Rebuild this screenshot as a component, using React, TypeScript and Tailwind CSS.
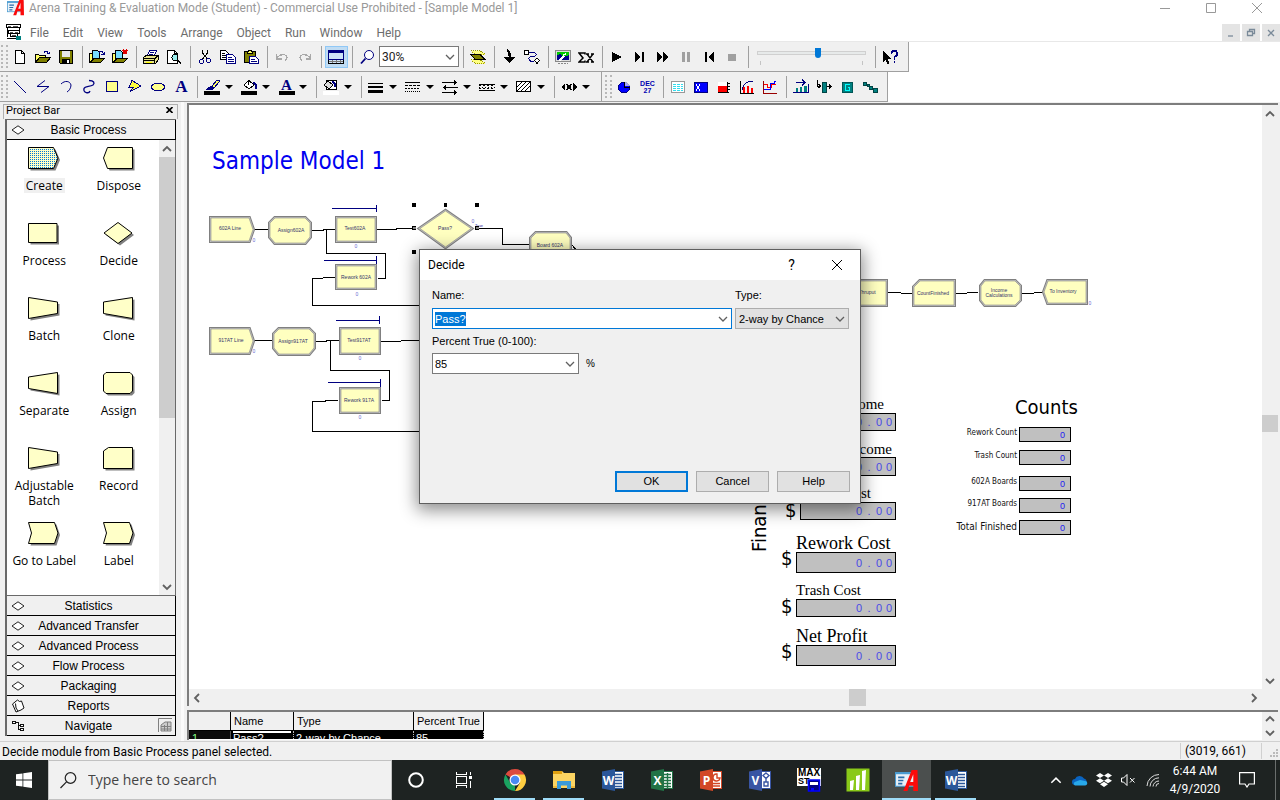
import React, { useEffect, useRef } from "react";

const UI = "font-[Roboto,'Noto_Sans',sans-serif]";
const HUMANIST = "font-['Open_Sans','Noto_Sans',sans-serif]";
const TAHOMA = "font-['DejaVu_Sans_Condensed','Noto_Sans',sans-serif]";

/* ---------- generic pieces ---------- */

function Icon({ children, className = "h-4 w-4", box = "0 0 16 16" }: { children: React.ReactNode; className?: string; box?: string }) {
  return (
    <svg viewBox={box} className={"shrink-0 " + className} fill="none" stroke="#000" shapeRendering="crispEdges" aria-hidden="true">
      {children}
    </svg>
  );
}

function Chevron({ dir = "down", className = "h-[6px] w-[10px]", color = "#606060", width = 1.3 }: { dir?: "up" | "down" | "left" | "right"; className?: string; color?: string; width?: number }) {
  const d = {
    down: "M1 1 5 5l4-4",
    up: "M1 5 5 1l4 4",
    left: "M7 -1 3 3l4 4",
    right: "M3 -1l4 4-4 4",
  }[dir];
  return (
    <svg viewBox="0 0 10 6" className={"shrink-0 overflow-visible " + className} fill="none" stroke={color} strokeWidth={width} aria-hidden="true">
      <path d={d} />
    </svg>
  );
}

function ArenaLogo({ className }: { className: string }) {
  return (
    <svg viewBox="0 0 22 22" className={className} aria-hidden="true">
      <rect x="0.5" y="3.5" width="20" height="13" fill="#e8f1f8" stroke="#4a9bd0" />
      <path d="M0 4h21" stroke="#4a9bd0" strokeWidth="2" />
      <path d="M3 8h6M3 11h5M3 14h4" stroke="#2a6da8" strokeWidth="1.5" />
      <path d="M8 21 16 1h5.500L22 21h-4.500v-5h-4l-1.500 5zM14.500 12.500h3V5z" fill="#fb0a0a" fillRule="evenodd" />
    </svg>
  );
}

/* ---------- toolbar drawings ---------- */

const NAVY = "#000080";
const OLIVE = "#808000";

const icons: Record<string, React.ReactNode> = {
  new: <path d="M3.500 1.500h6l3 3v10h-9zM9.500 1.500v3h3" fill="#fff" />,
  open: (
    <>
      <path d="M0.500 13.500v-8h3l1 1h6v2" fill="#ffff66" />
      <path d="M0.500 13.500 4.500 8.500h11l-4 5z" fill={OLIVE} />
      <path d="M9 3.500c2-2 4-1 4.500 1.500M11.500 4.500h3v-2" stroke={NAVY} />
    </>
  ),
  save: (
    <>
      <path d="M1.500 1.500h13v13h-12l-1-1z" fill={OLIVE} />
      <path d="M4 2h8v6H4z" fill="#e6e6e6" stroke="none" />
      <path d="M4 10h8v4H4z" fill="#000" stroke="none" />
      <path d="M9 11h2v3H9z" fill="#fff" stroke="none" />
    </>
  ),
  attach: (
    <>
      <path d="M0.500 13.500v-9h3v9z" fill="#ffff66" />
      <path d="M3.500 11V1.500h5l2 2V10z" fill="#7df" />
      <path d="M1 13.500 5 9.500h10.500l-4 4z" fill={OLIVE} />
      <path d="M10 3.500c2-2 4-1 4.500 1.500M12 5h3V3" stroke={NAVY} />
    </>
  ),
  detach: (
    <>
      <path d="M0.500 13.500v-9h3v9z" fill="#ffff66" />
      <path d="M3.500 11V1.500h5l2 2V10z" fill="#7df" />
      <path d="M1 13.500 5 9.500h10.500l-4 4z" fill={OLIVE} />
      <path d="m11 1 4 4m0-4-4 4" stroke="#e00000" strokeWidth="1.500" />
    </>
  ),
  print: (
    <>
      <path d="M4.500 6.500 6.500 1.500h7l-2 5z" fill="#fff" stroke={NAVY} />
      <path d="M7 3.500h4M6 5.500h4" stroke={NAVY} />
      <path d="M0.500 8.500 3 6.500h12.500v4l-3 4H0.500z" fill="#e8e48c" />
      <path d="M0.500 9.500h11v4M12 9.500l3-3M1 11.500h10" />
      <path d="M3 13.500h6" stroke="#ff0" />
    </>
  ),
  preview: (
    <>
      <path d="M1.500 1.500h7l3 3v10h-10zM8.500 1.500v3h3" fill="#fff" />
      <circle cx="9" cy="8.500" r="3" fill="#9ee" />
      <path d="m11 10.500 4 4" strokeWidth="2" />
    </>
  ),
  cut: (
    <>
      <path d="M5.500 1v3l5 6M10.500 1v3l-5 6" />
      <circle cx="4.500" cy="12.500" r="2" stroke={NAVY} />
      <circle cx="11.500" cy="11.500" r="2" stroke={NAVY} />
    </>
  ),
  copy: (
    <>
      <path d="M0.500 1.500h5l3 3v6h-8zM2 4.500h3M2 6.500h5M2 8.500h5" fill="#fff" />
      <path d="M6.500 5.500h6l3 3v6h-9zM8 8.500h4M8 10.500h6M8 12.500h6" fill="#fff" stroke={NAVY} />
    </>
  ),
  paste: (
    <>
      <path d="M1.500 2.500h11v11h-11z" fill={OLIVE} />
      <path d="M4.500 4.500v-2l2-1h1l2 1v2z" fill="#ff6" />
      <path d="M6.500 7.500h6l3 3v4h-9zM8 10.500h4M8 12.500h6" fill="#fff" stroke={NAVY} />
    </>
  ),
  undo: <path d="M2.500 5v5h5M3 9.500C5 5 13 4 13 9c0 1-1 2-2 2.500" stroke="#a8a8a8" strokeWidth="1.300" />,
  redo: <path d="M13.500 5v5h-5M13 9.500C11 5 3 4 3 9c0 1 1 2 2 2.500" stroke="#a8a8a8" strokeWidth="1.300" />,
  split: (
    <>
      <path d="M0.500 1.500h15v13h-15z" fill="#cfe4f7" />
      <path d="M1 2h14v2H1z" fill={NAVY} stroke="none" />
      <path d="M0.500 1.500h15v9h-15z" stroke={NAVY} />
      <path d="M1 12.500h14M4.500 11v3M8.500 11v3M12.500 11v3" stroke="#777" />
    </>
  ),
  magnify: (
    <>
      <circle cx="10" cy="6" r="4.500" fill="#fff" stroke={NAVY} shapeRendering="auto" />
      <path d="m6.500 9.500-4.500 5" stroke={NAVY} strokeWidth="1.800" shapeRendering="auto" />
    </>
  ),
  layers: (
    <>
      <path d="M1 1.500h9l5 4H5z" fill="#ffff80" stroke="#9a9a00" strokeDasharray="1 1" />
      <path d="M1 10.500h9l5 4H5z" fill="#ffff80" stroke="#9a9a00" strokeDasharray="1 1" />
      <path d="M1 5.500h9l5 5H5z" fill={OLIVE} />
    </>
  ),
  downArrow: (
    <>
      <path d="M6 1c3 2 3 5 3 9" strokeWidth="2.500" />
      <path d="M2 8h12l-5.500 6z" fill="#000" stroke="none" />
    </>
  ),
  connect: (
    <>
      <path d="M0.500 1.500h4v4h-4z" fill="#fff" />
      <path d="M5 3.500h5.500l2 2-2 2h-4l-2 2 2 2.500H10" stroke={NAVY} />
      <path d="m13 9 2.500 2.500L13 14.500l-2.500-3z" fill="#fff" />
    </>
  ),
  picture: (
    <>
      <path d="M0.500 1.500h15v11h-15z" fill="#ddd" stroke="#888" />
      <path d="M2 3h12v8H2z" fill="#00008b" stroke="none" />
      <path d="M2 3h12v3L9 8 5 5 2 6z" fill="#00c800" stroke="none" />
      <path d="M4 12 9 7M8 6l3-1" stroke="#fff" strokeWidth="1.500" />
      <path d="M3 14.500h10" stroke="#888" strokeDasharray="2 1" />
    </>
  ),
  sigma: (
    <g shapeRendering="auto">
      <path d="M7 5.500V4H1l4 5-4 4h6v-1.500" strokeWidth="1.500" />
      <path d="m9 5 6 8M15 5l-6 8M8 5h3M13 5h3M8 13h3M13 13h3" strokeWidth="1.300" />
    </g>
  ),
  play: <path d="M3 3v10l10-5z" fill="#000" stroke="none" />,
  step: <path d="M3 3v10l6-5zM10 3h2v10h-2z" fill="#000" stroke="none" />,
  fast: <path d="M2 3v10l6-5zM8 3v10l6-5z" fill="#000" stroke="none" />,
  pause: <path d="M4 3h3v10H4zM9 3h3v10H9z" fill="#a0a0a0" stroke="none" />,
  rewind: <path d="M4 3h2v10H4zM13 3v10L7 8z" fill="#000" stroke="none" />,
  stop: <path d="M4 5h8v7H4z" fill="#a0a0a0" stroke="none" />,
  help: (
    <>
      <path d="M1 2v11l2.500-2.500L5.500 15l2-1-2-4H9z" fill="#000" stroke="none" />
      <path d="M9.500 5V3.500L11 2h3l1 1.500V6l-2.500 2v2.500M12.500 12v2" stroke={NAVY} strokeWidth="1.800" />
    </>
  ),
  line: <path d="m2 2 12 12" stroke={NAVY} shapeRendering="auto" />,
  poly: <path d="M10 1.500 2 7.500h12l-8 6" stroke={NAVY} shapeRendering="auto" />,
  arc: <path d="M3 5c4-4 9-3 10 1 0 3-2 6-4 7" stroke={NAVY} shapeRendering="auto" />,
  bezier: <path d="M8 1.500c5 0 6 2.500 4 4.500-3 2-8 1-9 3.500C2 14 8 15 9 12" stroke={NAVY} shapeRendering="auto" strokeWidth="1.300" />,
  rect: <path d="M2.500 2.500h11v10h-11z" fill="#ffff8c" stroke={NAVY} />,
  polygon: <path d="M5 1.500 14 7 3 12.500 6.500 8H2z" fill="#ffff40" stroke={NAVY} />,
  ellipse: <ellipse cx="8" cy="8" rx="6.500" ry="4" fill="#ffff8c" stroke={NAVY} />,
  pen: (
    <>
      <path d="m8 7 5-6h2v2l-5 6z" fill="#ff6" stroke={NAVY} />
      <path d="M3 10.500 7 7l3 2-3 2z" fill={NAVY} stroke={NAVY} />
      <path d="M0 12h16v4H0z" fill="#000" stroke="none" />
    </>
  ),
  bucket: (
    <>
      <path d="M3 6 8 1.500 13 6l-5 4z" fill="#fff" />
      <path d="M12 4c3 0 3 2 2.500 6" stroke={NAVY} strokeWidth="2" />
      <path d="M7.500 6V0.500" />
      <path d="M0 12h16v4H0z" fill="#000" stroke="none" />
    </>
  ),
  windowBg: (
    <>
      <path d="M0 12h16v4H0z" fill="#fff" stroke="none" />
      <path d="M3.500 1.500h10v9h-10z" fill="#fff" />
      <path d="m1 6 4-4 5 4-4 4z" fill="#ddd" />
      <path d="M9 3c3 0 3 2 2.500 5" stroke={NAVY} strokeWidth="2" />
    </>
  ),
  weight: <path d="M0 4h15v1H0zM0 7h15v2H0zM0 11h15v3H0z" fill="#000" stroke="none" />,
  dashes: (
    <>
      <path d="M0 3.500h15" />
      <path d="M0 6.500h15" strokeDasharray="3 1" />
      <path d="M0 9.500h15" strokeDasharray="2 1" />
      <path d="M0 12.500h15" strokeDasharray="1 1" />
    </>
  ),
  arrows: <path d="M0 3.500h15M12 1.500l2 2-2 2M1 8.500h15M4 6.500l-2 2 2 2M0 13.500h15M12 11.500l2 2-2 2" />,
  pattern: (
    <>
      <path d="M0 5.500h16M0 11.500h16" />
      <path d="M0 6.500h16M0 9.500h16" strokeDasharray="2 2" />
      <path d="M0 8.500h16" strokeDasharray="1 2" />
    </>
  ),
  hatch: (
    <>
      <path d="M0.500 2.500h14v10h-14z" fill="#fff" />
      <path d="m1 8 5-5M1 12l9-9M5 12l9-9M9 12l5-5" shapeRendering="auto" />
    </>
  ),
  tagX: (
    <>
      <path d="M4 4 0 8l4 4zM12 4l4 4-4 4z" fill="#000" stroke="none" />
      <path d="m5.500 5 5 6M10.500 5l-5 6" strokeWidth="1.800" />
    </>
  ),
  clock: (
    <>
      <circle cx="8" cy="8.500" r="5.500" fill="#00f" stroke={NAVY} />
      <path d="M9 1h5v6H9z" fill="#f0f0f0" stroke="none" opacity=".7" />
      <path d="M8.500 3v5.500H14" stroke="#000" />
    </>
  ),
  sheet: (
    <>
      <path d="M1.500 2.500h13v11h-13z" fill="#fff" stroke="#999" />
      <path d="M3 5.500h10M3 7.500h10M3 9.500h10M3 11.500h10" stroke="#3de" strokeDasharray="3 1" />
    </>
  ),
  varX: (
    <>
      <path d="M1.500 3.500h13v10h-13z" fill="#00f" stroke={NAVY} />
      <path d="m3 5 4 7M7 5l-4 7" stroke="#fff" />
    </>
  ),
  level: (
    <>
      <path d="M2 3h9v5H2z" fill="#fff" stroke="none" />
      <path d="M2 7h9v7H2z" fill="#f00" stroke="none" />
      <path d="M11.500 3v11M2 13.500h11M11 4.500h3M11 7.500h3M11 10.500h3" />
    </>
  ),
  histogram: (
    <>
      <path d="M1.500 2v12.500H15" />
      <path d="M4 8h2v6H4zM8 7h2v7H8zM12 9h2v5h-2z" fill="#f00" stroke="none" />
      <path d="M3 10.500 4.500 6.500 7 4l3-1.500h4" stroke={NAVY} />
    </>
  ),
  plot: (
    <>
      <path d="M1.500 2v12.500H15" stroke="#900" />
      <path d="M2 5.500h3v3h4v-3h5" stroke="#f00" />
      <path d="M2 10.500h6v-6h4v-2h2" stroke="#00f" />
    </>
  ),
  queue: (
    <>
      <path d="M0 13.500h16M3 3.500h9m-3-3 3 3-3 3M15.500 5v9" stroke={NAVY} />
      <path d="M3 9h2v4H3zM7 8h2v5H7zM11 7h3v6h-3z" fill="#008080" stroke="none" />
    </>
  ),
  resource: (
    <>
      <path d="M1.500 1v6h3m-2-2 2 2-2 2M11 7.500h4m-2-2 2 2-2 2" />
      <path d="M6.500 3.500h4v10h-4z" fill="#008080" stroke="#044" />
    </>
  ),
  global: (
    <>
      <path d="M3.500 3.500h10v10h-10z" fill="#008080" stroke="#055" />
      <path d="M10.500 5.500h-4v6h4v-3h-2" stroke="#0ff" />
    </>
  ),
  route: <path d="M1.500 3.500h3v3h-3zM5.500 5.500h2v2h-2zM7.500 7.500h3v3h-3zM11.500 9.500h4v4h-4z" fill="#008080" stroke="#044" />,
};

function ToolButton({ name, label, active, disabled }: { name: string; label: string; active?: boolean; disabled?: boolean }) {
  return (
    <button
      type="button"
      aria-label={label}
      disabled={disabled}
      className={"flex h-[22px] w-[23px] shrink-0 items-center " + (active ? "border border-[#90c8f6] bg-[#c0dcf3] pl-[2px]" : "pl-[3px]")}
    >
      <Icon>{icons[name]}</Icon>
    </button>
  );
}

function LetterButton({ label, underline }: { label: string; underline?: boolean }) {
  return (
    <button type="button" aria-label={label} className="flex h-[22px] w-[23px] shrink-0 flex-col items-center justify-center">
      <span className={"font-['Liberation_Serif',serif] font-bold text-[#000080] " + (underline ? "text-[15px] leading-[12px]" : "text-[17px] leading-[16px]")}>A</span>
      {underline && <span className="h-1 w-4 bg-black" />}
    </button>
  );
}

function DropArrow({ label }: { label: string }) {
  return (
    <button type="button" aria-label={label} className="mr-1 flex h-[22px] w-[10px] shrink-0 items-center justify-center">
      <svg viewBox="0 0 8 4" className="h-1 w-2" aria-hidden="true">
        <path d="M0 0h8L4 4z" fill="#000" />
      </svg>
    </button>
  );
}

const Sep = () => <span className="flex h-[22px] w-2 shrink-0 justify-center"><span className="w-px bg-[#a0a0a0]" /></span>;

const Grip = () => (
  <span className="-mt-1 flex w-[9px] shrink-0 justify-center gap-[3px] self-stretch py-[3px]">
    <span className="w-0 border-l-2 border-dotted border-[#b8b8b8]" />
    <span className="w-0 border-l-2 border-dotted border-[#b8b8b8]" />
  </span>
);

const BAR = "flex h-[30px] items-start border-b border-r border-[#a0a0a0] bg-[#f0f0f0] pt-1";

function Toolbars() {
  return (
    <div className="shrink-0 border-t border-[#e8e8e8] bg-white">
      <div className="flex">
        <div className={BAR + " pr-[6px]"} role="toolbar" aria-label="Standard">
          <Grip />
          <ToolButton name="new" label="New" />
          <ToolButton name="open" label="Open" />
          <ToolButton name="save" label="Save" />
          <Sep />
          <ToolButton name="attach" label="Template Attach" />
          <ToolButton name="detach" label="Template Detach" />
          <Sep />
          <ToolButton name="print" label="Print" />
          <ToolButton name="preview" label="Print Preview" />
          <Sep />
          <ToolButton name="cut" label="Cut" />
          <ToolButton name="copy" label="Copy" />
          <ToolButton name="paste" label="Paste" />
          <Sep />
          <ToolButton name="undo" label="Undo" disabled />
          <ToolButton name="redo" label="Redo" disabled />
          <Sep />
          <ToolButton name="split" label="Split Screen" active />
          <Sep />
          <ToolButton name="magnify" label="View a Region" />
          <span className="relative flex h-[21px] w-[80px] shrink-0 items-center">
            <select aria-label="Zoom" className={UI + " h-full w-full appearance-none border border-[#7a7a7a] bg-white pl-[2px] text-[12px] leading-[16px] text-[#222]"}>
              <option>30%</option>
            </select>
            <Chevron className="pointer-events-none absolute right-1 h-[6px] w-[10px]" />
          </span>
          <Sep />
          <ToolButton name="layers" label="Layers" />
          <Sep />
          <ToolButton name="downArrow" label="Submodel" />
          <ToolButton name="connect" label="Connect" />
          <Sep />
          <ToolButton name="picture" label="Animation" />
          <ToolButton name="sigma" label="Expression Builder" />
          <Sep />
          <ToolButton name="play" label="Go" />
          <ToolButton name="step" label="Step" />
          <ToolButton name="fast" label="Fast-Forward" />
          <ToolButton name="pause" label="Pause" disabled />
          <ToolButton name="rewind" label="Start Over" />
          <ToolButton name="stop" label="End" disabled />
          <Sep />
          <span className="flex h-[22px] w-[119px] shrink-0 flex-col px-[5px] pt-[5px]">
            <input
              type="range"
              aria-label="Animation Speed"
              defaultValue={56}
              className="h-1 w-full appearance-none border border-[#d0d0d0] bg-[#e7eaea] [&::-webkit-slider-thumb]:h-[10px] [&::-webkit-slider-thumb]:w-[6px] [&::-webkit-slider-thumb]:appearance-none [&::-webkit-slider-thumb]:rounded-b-sm [&::-webkit-slider-thumb]:bg-[#0078d7]"
            />
            <span className="mt-[6px] flex h-1 justify-between px-[3px]">
              <span className="w-px bg-[#c4c4c4]" />
              <span className="w-px bg-[#c4c4c4]" />
            </span>
          </span>
          <Sep />
          <ToolButton name="help" label="Context Help" />
        </div>
      </div>
      <div className="flex">
        <div className={BAR + " pr-[6px]"} role="toolbar" aria-label="Draw">
          <Grip />
          <ToolButton name="line" label="Line" />
          <ToolButton name="poly" label="Polyline" />
          <ToolButton name="arc" label="Arc" />
          <ToolButton name="bezier" label="Bezier Curve" />
          <ToolButton name="rect" label="Box" />
          <ToolButton name="polygon" label="Polygon" />
          <ToolButton name="ellipse" label="Ellipse" />
          <LetterButton label="Text" />
          <Sep />
          <ToolButton name="pen" label="Line Color" />
          <DropArrow label="Choose line color" />
          <ToolButton name="bucket" label="Fill Color" />
          <DropArrow label="Choose fill color" />
          <LetterButton label="Text Color" underline />
          <DropArrow label="Choose text color" />
          <Sep />
          <ToolButton name="windowBg" label="Window Background Color" />
          <DropArrow label="Choose background color" />
          <Sep />
          <ToolButton name="weight" label="Line Width" />
          <DropArrow label="Choose line width" />
          <ToolButton name="dashes" label="Line Style" />
          <DropArrow label="Choose line style" />
          <ToolButton name="arrows" label="Arrow Style" />
          <DropArrow label="Choose arrow style" />
          <ToolButton name="pattern" label="Line Pattern" />
          <DropArrow label="Choose line pattern" />
          <ToolButton name="hatch" label="Fill Pattern" />
          <DropArrow label="Choose fill pattern" />
          <Sep />
          <ToolButton name="tagX" label="Text Display" />
          <DropArrow label="Choose text display" />
        </div>
        <div className={BAR + " pl-[2px] pr-[5px]"} role="toolbar" aria-label="Animate">
          <Grip />
          <ToolButton name="clock" label="Clock" />
          <button type="button" className="flex h-[22px] w-[23px] shrink-0 flex-col items-center justify-center font-['Liberation_Sans',sans-serif] text-[7px] font-bold leading-[7px] text-[#0000b0]">
            <span>DEC</span>
            <span>27</span>
          </button>
          <Sep />
          <ToolButton name="sheet" label="Date" />
          <ToolButton name="varX" label="Variable" />
          <ToolButton name="level" label="Level" />
          <ToolButton name="histogram" label="Histogram" />
          <ToolButton name="plot" label="Plot" />
          <Sep />
          <ToolButton name="queue" label="Queue" />
          <ToolButton name="resource" label="Resource" />
          <ToolButton name="global" label="Global" />
          <ToolButton name="route" label="Route" />
        </div>
      </div>
    </div>
  );
}

/* ---------- title and menu ---------- */

function TitleBar() {
  return (
    <header className={UI + " shrink-0 bg-white"}>
      <div className="flex h-[22px] items-start">
        <ArenaLogo className="-mt-px ml-[7px] h-[17px] w-[17px]" />
        <h1 className="ml-[5px] flex-1 text-[12px] font-normal leading-[17px] text-[#999]">
          Arena Training &amp; Evaluation Mode (Student) - Commercial Use Prohibited - [Sample Model 1]
        </h1>
        <div className="flex">
          <button type="button" aria-label="Minimize" className="flex h-4 w-[46px] items-center justify-center">
            <svg viewBox="0 0 10 10" className="h-[10px] w-[10px]" stroke="#999" fill="none"><path d="M0 5.500h10" /></svg>
          </button>
          <button type="button" aria-label="Restore" className="flex h-4 w-[46px] items-center justify-center">
            <svg viewBox="0 0 10 10" className="h-[10px] w-[10px]" stroke="#999" fill="none"><path d="M.5.500h9v9h-9z" /></svg>
          </button>
          <button type="button" aria-label="Close" className="flex h-4 w-[46px] items-center justify-center">
            <svg viewBox="0 0 10 10" className="h-[10px] w-[10px]" stroke="#999" fill="none"><path d="m0 0 10 10M10 0 0 10" /></svg>
          </button>
        </div>
      </div>
      <nav className="flex h-[19px] items-center" aria-label="Main menu">
        <Icon className="ml-[6px] mt-px h-4 w-4">
          <path d="M0.500 0.500h14v3h-14zM2.500 6.500h11v3h-11zM4.500 9.500v3h7v-3M1.500 3.500v9M13.500 3.500v3" fill="#fff" />
          <path d="M2 2h3M7 2h5M4 8h3M9 8h3M6 11h4" stroke="#555" />
          <path d="M1 14.500h9" strokeWidth="1.500" />
          <path d="M10 12h5v4h-5z" fill="#008080" stroke="none" />
        </Icon>
        <div className="ml-2 mt-[3px] flex flex-1 gap-[14px] text-[12px] leading-[16px] text-[#6d6d6d]">
          {["File", "Edit", "View", "Tools", "Arrange", "Object", "Run", "Window", "Help"].map((m) => (
            <button type="button" key={m}>{m}</button>
          ))}
        </div>
        <div className="flex gap-[2px] self-end">
          {[
            ["Minimize document", "M2 8h5"],
            ["Restore document", "M3.500 3V1.500h5v4H7M1.500 3.500h5v4h-5z"],
            ["Close document", "m2 2 6 6M8 2 2 8"],
          ].map(([l, d]) => (
            <button type="button" key={l} aria-label={l} className="flex h-[17px] w-[18px] items-center justify-center bg-[#e4e4e4]">
              <svg viewBox="0 0 10 10" className="h-[10px] w-[10px]" stroke="#7a8a99" strokeWidth="1.300" fill="none"><path d={d} /></svg>
            </button>
          ))}
        </div>
      </nav>
    </header>
  );
}

/* ---------- project bar ---------- */

const modules: { name: string; d: string; dark?: boolean }[] = [
  { name: "Create", d: "M.5.500h25l4.500 10.500-4.500 10.500h-25z", dark: true },
  { name: "Dispose", d: "M4.500.500h25v21h-25L.5 11z" },
  { name: "Process", d: "M.5 1.500h28.500v19H.5z" },
  { name: "Decide", d: "M15 .5 29 11 15 21.500 1 11z" },
  { name: "Batch", d: "M.5.500 29.500 5v11.500L.5 21.500z" },
  { name: "Clone", d: "M29.500.500.500 5v11.500l29 5z" },
  { name: "Separate", d: "M29.500.500.500 5v11.500l29 5z" },
  { name: "Assign", d: "M3 .5h24l2.500 2.500v16L27 21.500H3L.5 19V3z" },
  { name: "Adjustable Batch", d: "M.5.500 29.500 5v11.500L.5 21.500z" },
  { name: "Record", d: "M5.500.500h24v21H.5V4z" },
  { name: "Go to Label", d: "M.5.500h26l3.500 10.500-3.500 10.500H.5L3.500 11z" },
  { name: "Label", d: "M.5.500h26l3.500 10.500-3.500 10.500H.5L3.500 11z" },
];

const Diamond = () => (
  <svg viewBox="0 0 14 10" className="h-[10px] w-[14px]" fill="#fff" stroke="#222" aria-hidden="true"><path d="M7 .8 13 5 7 9.200 1 5z" /></svg>
);

const ReportIcon = () => (
  <svg viewBox="0 0 14 14" className="h-[14px] w-[14px]" fill="#fff" stroke="#111" aria-hidden="true">
    <path d="m1.500 5 5-4 2 1.500 2-.5L13 9l-3 2-5 2zM4.500 4.500 5 9l2 3" />
  </svg>
);

const TreeIcon = () => (
  <svg viewBox="0 0 14 12" className="h-3 w-[14px]" fill="#fff" stroke="#111" shapeRendering="crispEdges" aria-hidden="true">
    <path d="M1.500 1.500h3v2h-3zM9.500 4.500h3v2h-3zM9.500 8.500h3v2h-3zM5 2.500h2.500v7H9M7.500 5.500H9" />
  </svg>
);

function SectionButton({ label, icon, trailing }: { label: string; icon: React.ReactNode; trailing?: React.ReactNode }) {
  return (
    <button type="button" className="flex h-5 w-full shrink-0 items-center border-b border-r border-black bg-[#f0f0f0] pl-[3px]">
      <span className="flex w-4 justify-center">{icon}</span>
      <span className="flex-1 text-center font-['Liberation_Sans',sans-serif] text-[12px] leading-[16px] text-black">{label}</span>
      <span className="flex w-6 justify-end pr-[2px]">{trailing}</span>
    </button>
  );
}

function ProjectBar() {
  return (
    <aside className="flex w-[181px] shrink-0 flex-col px-[3px] pb-[5px] pt-[2px]">
      <div className={UI + " flex h-[15px] shrink-0 items-start justify-between border border-b-0 border-[#b0b0b0] pl-[2px] pr-[4px]"}>
        <h2 className="text-[11px] font-normal leading-[11px] text-black">Project Bar</h2>
        <button type="button" aria-label="Close Project Bar" className="mt-[2px]">
          <svg viewBox="0 0 7 6" className="h-[6px] w-[7px]" stroke="#000" strokeWidth="1.600"><path d="m.5 0 6 6m0-6-6 6" /></svg>
        </button>
      </div>
      <div className="mx-[2px] flex min-h-0 flex-1 flex-col border-l-2 border-t border-[#696969]">
        <SectionButton label="Basic Process" icon={<Diamond />} />
        <div className="flex min-h-0 flex-1 border-b border-r border-[#696969] bg-white">
          <ul className={HUMANIST + " grid flex-1 auto-rows-[75px] grid-cols-2 pr-[3px] pt-[7px]"}>
            {modules.map((m) => (
              <li key={m.name} className="flex flex-col items-center gap-[7px]">
                <svg viewBox="0 0 32 24" className="h-6 w-8 shrink-0" aria-hidden="true">
                  <defs>
                    <pattern id="selDots" width="2" height="2" patternUnits="userSpaceOnUse">
                      <rect width="2" height="2" fill="#ffffc8" />
                      <rect width="1" height="1" fill="#0078d7" />
                    </pattern>
                  </defs>
                  <path d={m.d} transform="translate(2 2)" fill="#808080" />
                  <path d={m.d} fill={m.dark ? "url(#selDots)" : "#ffffc8"} stroke="#000" />
                </svg>
                <span className={"px-[2px] text-center text-[12px] leading-[15px] text-black " + (m.dark ? "bg-[#f0f0f0]" : "")}>{m.name}</span>
              </li>
            ))}
          </ul>
          <div className="flex w-[16px] shrink-0 flex-col items-center bg-[#f0f0f0]">
            <span className="flex h-[17px] items-center"><Chevron dir="up" width={1.8} /></span>
            <span className="w-full flex-[262] bg-[#cdcdcd]" />
            <span className="flex-[160]" />
            <span className="flex h-[17px] items-center"><Chevron dir="down" width={1.8} /></span>
          </div>
        </div>
        {["Statistics", "Advanced Transfer", "Advanced Process", "Flow Process", "Packaging"].map((s) => (
          <SectionButton key={s} label={s} icon={<Diamond />} />
        ))}
        <SectionButton label="Reports" icon={<ReportIcon />} />
        <SectionButton
          label="Navigate"
          icon={<TreeIcon />}
          trailing={
            <svg viewBox="0 0 15 15" className="h-[15px] w-[15px]" fill="none" stroke="#808080" aria-hidden="true">
              <path d="M.5 14V.5H14" />
              <path d="m3 7 4-3h6v9H3z" fill="#ccc" />
              <path d="M3 8.500h10M3 11h10M6.500 7v6M9.500 4v9" />
            </svg>
          }
        />
      </div>
    </aside>
  );
}

/* ---------- model canvas ---------- */

const nodes: { d: string; label: string[]; x: number; y: number }[] = [
  { d: "M211 218h38l4 11.500-4 11.500h-38z", label: ["602A Line"], x: 230, y: 230 },
  { d: "M275 218h30l5 5v14l-5 6h-30l-5-6v-14z", label: ["Assign602A"], x: 291, y: 232 },
  { d: "M337 218h38v23h-38z", label: ["Test602A"], x: 355, y: 230 },
  { d: "M337 266h38v22h-38z", label: ["Rework 602A"], x: 356, y: 279 },
  { d: "M445.500 211 471 228.500 445.500 247 420 228.500z", label: ["Pass?"], x: 445, y: 230 },
  { d: "M536 233h30l4 5v14l-4 6h-30l-5-6v-14z", label: ["Board 602A"], x: 550, y: 247 },
  { d: "M211 329h38l4 12-4 12h-38z", label: ["917AT Line"], x: 231, y: 342 },
  { d: "M279 329h30l5 5v14l-5 6h-30l-5-6v-14z", label: ["Assign917AT"], x: 293, y: 343 },
  { d: "M341 329h38v24h-38z", label: ["Test917AT"], x: 359, y: 342 },
  { d: "M341 389h38v23h-38z", label: ["Rework 917A"], x: 359, y: 402 },
  { d: "M845 281h41v24h-41z", label: ["Thruput"], x: 867, y: 294 },
  { d: "M920 281h34v24h-40v-18z", label: ["CountFinished"], x: 933, y: 295 },
  { d: "M985 281h30l5 5v14l-5 5h-30l-4-5v-14z", label: ["Income", "Calculations"], x: 999, y: 292 },
  { d: "M1048 281h38v22h-38l-4-11z", label: ["To Inventory"], x: 1063, y: 293 },
];

const wires = [
  "M254 229.500h14", "M312 230.500h11v-1h12", "M326.500 229.500v24h59v25h-8",
  "M335 277.500h-6l-11 1h-5.500v27h108", "M377 229.500h19l2-1.500h16", "M479 228.500h23.500v16h26", "M572 245l5 6",
  "M254 340.500h18", "M316 341.500h10v-1h13", "M330.500 341v29.500h59v29.500h-8", "M381 341.500h19l2-1h18",
  "M338 400.500 325 401v.5h-12.500v30h108", "M888 292.500h12l2 1h10", "M956 293.500h10l2-1h10", "M1022 293.500h11l2-1h8",
];

const queues = [
  "M332 208.500h44.500M376.500 205v7", "M324 260.500h52.500M376.500 256v8",
  "M336 320.500h44M379.500 316v8", "M328 382.500h52.500M380.500 379v8",
];

const counters: [number, number][] = [[254, 242], [356, 248], [357, 296], [254, 353], [360, 360], [360, 419], [1090, 305], [473, 223]];

function Diagram() {
  return (
    <svg viewBox="189 105 1073 583" className="absolute left-0 top-0 h-[583px] w-[1073px]" fill="none" role="img" aria-label="Process flow diagram">
      <g stroke="#000" shapeRendering="crispEdges">{wires.map((d) => <path key={d} d={d} />)}</g>
      <g stroke="#000080" shapeRendering="crispEdges">{queues.map((d) => <path key={d} d={d} />)}</g>
      {nodes.map((n) => (
        <g key={n.label[0]}>
          <path d={n.d} stroke="#808080" strokeWidth="4" />
          <path d={n.d} stroke="#bdbdbd" strokeWidth="2" />
          <path d={n.d} fill="#ffffc0" stroke="#8a8a8a" strokeWidth=".6" />
          {n.label.map((t, i) => (
            <text key={t} x={n.x} y={n.y + i * 5} textAnchor="middle" className="fill-[#34346a] font-['Liberation_Sans',sans-serif] text-[5px]">{t}</text>
          ))}
        </g>
      ))}
      {counters.map(([x, y]) => (
        <text key={x + "-" + y} x={x} y={y} textAnchor="middle" className="fill-[#6a6ad0] font-['Liberation_Sans',sans-serif] text-[5px]">0</text>
      ))}
      <text x="475" y="227" className="fill-[#3030a0] font-['Liberation_Sans',sans-serif] text-[4px]">True</text>
      <g fill="#000">
        <path d="M412 203h4v4h-4zM444 203h3v4h-3zM475 203h4v4h-4zM412 250h4v4h-4zM412 226h4v4h-4zM475 226h4v4h-4z" />
        <path d="M413 227.500h3v1h-3zM476 227.500h3v1h-3z" fill="#fff" />
      </g>
    </svg>
  );
}

const money: { label: string; labelPos: string; box: string; dollar?: string }[] = [
  { label: "Income", labelPos: "right-[378px] top-[291px] text-[15px]", box: "left-[607px] top-[308px] h-[18px] w-[100px]" },
  { label: "Income", labelPos: "right-[370px] top-[336px] text-[15px]", box: "left-[607px] top-[352px] h-[19px] w-[100px]" },
  { label: "Cost", labelPos: "right-[391px] top-[380px] text-[15px]", box: "left-[611px] top-[397px] h-[18px] w-[96px]", dollar: "left-[596px] top-[394px]" },
  { label: "Rework Cost", labelPos: "left-[607px] top-[430px] text-[18px]", box: "left-[607px] top-[447px] h-[21px] w-[100px]", dollar: "left-[592px] top-[442px]" },
  { label: "Trash Cost", labelPos: "left-[607px] top-[477px] text-[15px]", box: "left-[607px] top-[494px] h-[18px] w-[100px]", dollar: "left-[592px] top-[490px]" },
  { label: "Net Profit", labelPos: "left-[607px] top-[523px] text-[18px]", box: "left-[607px] top-[540px] h-[21px] w-[100px]", dollar: "left-[592px] top-[535px]" },
];

const counts = [
  { label: "Rework Count", row: "top-[322px]", size: "text-[8px] leading-[11px]" },
  { label: "Trash Count", row: "top-[345px]", size: "text-[8px] leading-[11px]" },
  { label: "602A Boards", row: "top-[371px]", size: "text-[8px] leading-[11px]" },
  { label: "917AT Boards", row: "top-[393px]", size: "text-[8px] leading-[11px]" },
  { label: "Total Finished", row: "top-[415px]", size: "text-[10px] leading-[13px]" },
];

function Canvas() {
  return (
    <div className="relative min-h-0 min-w-0 flex-1 overflow-hidden bg-white">
      <Diagram />
      <p className={TAHOMA + " absolute left-[23px] top-[41px] text-[24px] leading-[30px] text-[#0000f0]"}>Sample Model 1</p>
      <p className={TAHOMA + " absolute left-[560px] top-[340px] flex h-[107px] rotate-180 items-start text-[20px] leading-[20px] text-black [writing-mode:vertical-rl]"}>Financials</p>
      {money.map((m, i) => (
        <React.Fragment key={i}>
          <span className={"absolute whitespace-nowrap font-['Liberation_Serif',serif] leading-[16px] text-black " + m.labelPos}>{m.label}</span>
          {m.dollar && <span className={TAHOMA + " absolute text-[20px] leading-[22px] text-black " + m.dollar}>$</span>}
          <span className={"absolute flex items-center justify-end border border-black bg-[#c0c0c0] pr-[1px] font-['Liberation_Sans',sans-serif] text-[11px] leading-[14px] text-[#4a4ae6] " + m.box}>
            {["0", ".", "0", "0"].map((c, k) => <span key={k} className="w-[10px] text-center">{c}</span>)}
          </span>
        </React.Fragment>
      ))}
      <p className={TAHOMA + " absolute left-[826px] top-[290px] text-[20px] leading-[24px] text-black"}>Counts</p>
      {counts.map((c) => (
        <div key={c.label} className={"absolute left-[760px] flex w-[122px] items-start justify-end gap-[2px] " + c.row}>
          <span className={TAHOMA + " whitespace-nowrap text-[#111] " + c.size}>{c.label}</span>
          <span className="h-[15px] w-[52px] shrink-0 border border-black bg-[#c0c0c0] pr-[5px] text-right font-['Liberation_Sans',sans-serif] text-[9px] leading-[14px] text-[#2020f0]">0</span>
        </div>
      ))}
    </div>
  );
}

function Workspace() {
  return (
    <main className="flex min-w-0 flex-1 flex-col gap-1 pb-px pr-[2px] pt-px">
      <section className="flex min-h-0 flex-1 flex-col border-l-2 border-t-2 border-[#7d7d7d]" aria-label="Model window">
        <div className="flex min-h-0 flex-1">
          <Canvas />
          <div className="flex w-4 shrink-0 flex-col items-center bg-[#f0f0f0]">
            <span className="flex h-[17px] items-center"><Chevron dir="up" width={1.8} /></span>
            <span className="flex-[293]" />
            <span className="h-[17px] w-full bg-[#cdcdcd]" />
            <span className="flex-[240]" />
            <span className="flex h-[17px] items-center"><Chevron dir="down" width={1.8} /></span>
          </div>
        </div>
        <div className="flex h-[17px] shrink-0 items-center bg-[#f0f0f0] pr-4">
          <span className="flex w-4 justify-center"><Chevron dir="left" width={1.8} /></span>
          <span className="flex-[644]" />
          <span className="h-full w-[17px] bg-[#cdcdcd]" />
          <span className="flex-[379]" />
          <span className="flex w-[17px] justify-center"><Chevron dir="right" width={1.8} /></span>
        </div>
      </section>
      <section className="flex h-[30px] shrink-0 overflow-hidden border-l-2 border-t-2 border-[#7d7d7d] bg-white" aria-label="Module spreadsheet">
        <div className="h-[27px] flex-1 overflow-hidden">
          <table className="table-fixed border-separate border-spacing-0 font-['Liberation_Sans',sans-serif] text-[11px] leading-[14px]">
            <colgroup>
              <col className="w-[42px]" />
              <col className="w-[63px]" />
              <col className="w-[120px]" />
              <col className="w-[70px]" />
            </colgroup>
            <thead>
              <tr className="h-[19px] bg-[#f0f0f0] text-left text-black">
                {["", "Name", "Type", "Percent True"].map((h) => (
                  <th key={h} className="whitespace-nowrap border-b border-r border-black p-0 pl-[3px] font-normal">{h}</th>
                ))}
              </tr>
            </thead>
            <tbody>
              <tr className="bg-black align-top text-white">
                <th className="border-r border-[#555] bg-[#0c0c0c] p-0 pl-[3px] text-left font-normal text-[#8f8]">1</th>
                <td className="border-r border-dotted border-[#bbb] p-0 pl-[2px] pr-[2px]"><span className="block border-t-2 border-solid border-white leading-[10px]">Pass?</span></td>
                <td className="border-r border-dotted border-[#bbb] p-0 pl-[2px]">2-way by Chance</td>
                <td className="border-r border-dotted border-[#bbb] p-0 pl-[2px]">85</td>
              </tr>
            </tbody>
          </table>
        </div>
        <div className="flex w-4 flex-col items-center justify-around bg-[#f0f0f0]">
          <Chevron dir="up" width={1.8} />
          <Chevron dir="down" width={1.8} />
        </div>
      </section>
    </main>
  );
}

/* ---------- dialog ---------- */

function DecideDialog() {
  const nameRef = useRef<HTMLInputElement>(null);
  useEffect(() => {
    nameRef.current?.focus();
    nameRef.current?.select();
  }, []);
  const btn = "h-[21px] w-[73px] bg-[#e1e1e1] text-center";
  return (
    <div role="dialog" aria-label="Decide" className="absolute left-[419px] top-[249px] w-[442px] border border-[#5f5f5f] bg-[#f0f0f0] font-['Liberation_Sans',sans-serif] text-[11px] text-black shadow-[0_4px_16px_2px_rgba(0,0,0,0.45)]">
      <div className={UI + " flex h-[30px] items-center bg-white pl-2"}>
        <h2 className="flex-1 text-[12px] font-normal leading-[16px]">Decide</h2>
        <button type="button" aria-label="What's this" className="flex h-full w-[45px] items-center justify-center text-[14px]">?</button>
        <button type="button" aria-label="Close" className="flex h-full w-[46px] items-center justify-center">
          <svg viewBox="0 0 10 10" className="h-[10px] w-[10px]" stroke="#000" fill="none"><path d="m0 0 10 10M10 0 0 10" /></svg>
        </button>
      </div>
      <form className="flex flex-col pb-[11px] pl-3 pr-[11px] pt-2" onSubmit={(e) => e.preventDefault()}>
        <div className="flex gap-[3px]">
          <div className="flex w-[300px] flex-col gap-[6px]">
            <label htmlFor="name" className="leading-[14px]">Name:</label>
            <div className="flex h-[21px] items-center border border-[#0078d7] bg-white pr-[3px]">
              <input id="name" ref={nameRef} defaultValue="Pass?" className="h-[14px] min-w-0 flex-1 bg-transparent pl-[2px] leading-[14px] outline-none selection:bg-[#0078d7] selection:text-white" />
              <Chevron />
            </div>
          </div>
          <div className="flex w-[114px] flex-col gap-[6px]">
            <label htmlFor="type" className="leading-[14px]">Type:</label>
            <div className="relative flex h-[21px] items-center">
              <select id="type" className="h-full w-full appearance-none border border-[#adadad] bg-[#e1e1e1] pl-[3px] leading-[16px]">
                <option>2-way by Chance</option>
              </select>
              <Chevron className="pointer-events-none absolute right-1 h-[6px] w-[10px]" />
            </div>
          </div>
        </div>
        <label htmlFor="percent" className="mt-[5px] leading-[14px]">Percent True (0-100):</label>
        <div className="mt-[5px] flex items-center gap-[7px]">
          <div className="flex h-[21px] w-[147px] items-center border border-[#7a7a7a] bg-white pr-[3px]">
            <input id="percent" defaultValue="85" className="min-w-0 flex-1 bg-transparent pl-[2px] leading-[14px] outline-none" />
            <Chevron />
          </div>
          <span className="text-[10px] leading-[14px]">%</span>
        </div>
        <div className="-mr-px mt-[97px] flex justify-end gap-2">
          <button type="submit" className={btn + " border-2 border-[#0078d7]"}>OK</button>
          <button type="button" className={btn + " border border-[#adadad]"}>Cancel</button>
          <button type="button" className={btn + " border border-[#adadad]"}>Help</button>
        </div>
      </form>
    </div>
  );
}

/* ---------- status bar and taskbar ---------- */

function StatusBar() {
  return (
    <footer className={UI + " flex h-[19px] shrink-0 items-center border-t border-[#d0d0d0] bg-[#f0f0f0] text-[12px] leading-[16px] text-black"}>
      <span className="flex-1 pl-[2px] pt-[2px]">Decide module from Basic Process panel selected.</span>
      <span className="h-4 w-[82px] border-x border-[#d0d0d0] pl-1">(3019, 661)</span>
      <svg viewBox="0 0 18 16" className="h-4 w-[18px]" fill="#bbb" aria-hidden="true">
        <path d="M14 6h2v2h-2zM11 9h2v2h-2zM14 9h2v2h-2zM8 12h2v2H8zM11 12h2v2h-2zM14 12h2v2h-2z" />
      </svg>
    </footer>
  );
}

function OfficeIcon({ color, letter, detail }: { color: string; letter: string; detail: string }) {
  return (
    <svg viewBox="0 0 24 24" className="h-6 w-6" aria-hidden="true">
      <rect x="11.500" y="3.500" width="11" height="17" fill="#fff" stroke={color} />
      <path d={detail} stroke={color} strokeWidth="1.400" fill="none" />
      <path d="M1 3.500 14 1v22L1 20.500z" fill={color} />
      <text x="7.500" y="16.500" textAnchor="middle" className="fill-white font-['Open_Sans',sans-serif] text-[12px] font-bold">{letter}</text>
    </svg>
  );
}

const LINES = "M14 6.500h7M14 9.500h7M14 12.500h7M14 15.500h7M14 18.500h7";

const apps: { label: string; icon: React.ReactNode; state?: "running" | "active" }[] = [
  {
    label: "Google Chrome",
    state: "running",
    icon: (
      <svg viewBox="0 0 24 24" className="h-6 w-6" aria-hidden="true">
        <path d="M12 12 2.470 6.500A11 11 0 0 1 21.530 6.500z" fill="#dd4b3e" />
        <path d="M12 6.500h9.530A11 11 0 0 1 12 23l5-8.300z" fill="#ffcd40" />
        <path d="M2.470 6.500 7.200 14.800 12 17.500 12 23A11 11 0 0 1 2.470 6.500z" fill="#1aa260" />
        <circle cx="12" cy="12" r="5.500" fill="#fff" />
        <circle cx="12" cy="12" r="4.300" fill="#4a8af4" />
      </svg>
    ),
  },
  {
    label: "File Explorer",
    state: "running",
    icon: (
      <svg viewBox="0 0 24 24" className="h-6 w-6" aria-hidden="true">
        <path d="M1 3h9l2 2h11v15H1z" fill="#fcd462" />
        <path d="M1 3h9v3H1z" fill="#e0a010" />
        <path d="M5 13h14v8h-4v-3.500H9V21H5z" fill="#3a9ad9" />
        <path d="M1 18h4v2H1zM19 18h4v2h-4z" fill="#f0b93a" />
      </svg>
    ),
  },
  { label: "Word", icon: <OfficeIcon color="#2b579a" letter="W" detail={LINES} /> },
  { label: "Excel", icon: <OfficeIcon color="#217346" letter="X" detail={LINES + "M17.500 5v15"} /> },
  { label: "PowerPoint", icon: <OfficeIcon color="#d24726" letter="P" detail="M18 6a3.500 3.500 0 1 0 3 4h-3zM14 15.500h7M14 18h7" /> },
  { label: "Visio", icon: <OfficeIcon color="#3955a3" letter="V" detail="m18 5 3 2.500-3 3-3-3zM18 10v4M16 14h4v4h-4z" /> },
  {
    label: "Maxst",
    icon: (
      <svg viewBox="0 0 24 24" className="h-6 w-6" aria-hidden="true">
        <rect width="24" height="18" fill="#fff" />
        <text x="12" y="8" textAnchor="middle" className="fill-black font-['Liberation_Sans',sans-serif] text-[10px] font-bold">MAX</text>
        <text x="1" y="16" className="fill-black font-['Liberation_Sans',sans-serif] text-[9px] font-bold">ST</text>
        <path d="M11.500 12h11v11h-11z" fill="#000080" stroke="#00f" strokeWidth="1.500" />
        <path d="M13 14h8v3h-8z" fill="#fff" />
        <path d="M14 20h3v3h-3z" fill="#00f" />
      </svg>
    ),
  },
  {
    label: "Minitab",
    icon: (
      <svg viewBox="0 0 24 24" className="h-6 w-6" aria-hidden="true">
        <rect x=".5" y=".5" width="23" height="23" fill="#8ac919" />
        <path d="m4 13 4-1-1 10H4zM10 8l4-1-1 15h-3zM16 3l4-1-1 20h-3z" fill="#fff" />
      </svg>
    ),
  },
  { label: "Arena", state: "active", icon: <ArenaLogo className="h-[23px] w-[23px]" /> },
  { label: "Word document", state: "running", icon: <OfficeIcon color="#2b579a" letter="W" detail={LINES} /> },
];

function Taskbar() {
  return (
    <footer className={UI + " flex h-10 shrink-0 items-stretch bg-[#1e2322] text-white"}>
      <button type="button" aria-label="Start" className="flex w-12 items-center justify-center">
        <svg viewBox="0 0 16 16" className="h-4 w-4" fill="#fff"><path d="M0 2.300 6.500 1.400v6.100H0zM7.300 1.300 16 0v7.500H7.300zM0 8.400h6.500v6.200L0 13.700zM7.300 8.400H16V16l-8.700-1.200z" /></svg>
      </button>
      <label className="flex w-[344px] items-center gap-[11px] border border-[#c2c2c2] bg-[#f1f1f1] pl-[11px]">
        <svg viewBox="0 0 17 17" className="h-[17px] w-[17px]" fill="none" stroke="#222" strokeWidth="1.200" aria-hidden="true"><circle cx="10.500" cy="6" r="5.300" /><path d="M6.500 9.800.5 16" /></svg>
        <input aria-label="Search" placeholder="Type here to search" className={HUMANIST + " min-w-0 flex-1 bg-transparent text-[14px] leading-[20px] outline-none placeholder:text-[#444]"} />
      </label>
      <button type="button" aria-label="Cortana" className="flex w-12 items-center justify-center">
        <svg viewBox="0 0 16 16" className="h-4 w-4" fill="none" stroke="#fff" strokeWidth="2"><circle cx="8" cy="8" r="6.800" /></svg>
      </button>
      <button type="button" aria-label="Task View" className="flex w-[50px] items-center pl-4">
        <svg viewBox="0 0 16 16" className="h-4 w-4" fill="none" stroke="#fff" shapeRendering="crispEdges"><path d="M.5 0v2.500h10V0M.5 16v-2.500h10V16M.5 4.500h10v7H.5zM14.500 0v3M14.500 9v7" /><path d="M13 4h3v3h-3z" fill="#fff" stroke="none" /></svg>
      </button>
      {apps.map((a) => (
        <button
          type="button"
          key={a.label}
          aria-label={a.label}
          className={"relative flex w-[49px] items-center justify-center " + (a.state === "active" ? "bg-[#4b4f4e]" : "")}
        >
          {a.icon}
          {a.state && <span className={"absolute bottom-0 h-[2px] bg-[#9fdcf8] " + (a.state === "active" ? "inset-x-0" : "inset-x-1")} />}
        </button>
      ))}
      <div className="ml-auto flex items-center">
        <button type="button" aria-label="Show hidden icons" className="flex w-6 justify-center"><Chevron dir="up" color="#fff" className="h-[7px] w-[12px]" /></button>
        <button type="button" aria-label="OneDrive" className="flex w-6 justify-center">
          <svg viewBox="0 0 16 11" className="h-[11px] w-4"><path d="M3 10a3 3 0 0 1 0-6 5 5 0 0 1 9-.5A3.500 3.500 0 0 1 13 10z" fill="#0a64c0" /><path d="M3 10.500c-2-1-1-4 1-4L8 5l5 1c3 0 3 4.500 0 4.500z" fill="#28a8ea" /></svg>
        </button>
        <button type="button" aria-label="Dropbox" className="flex w-6 justify-center">
          <svg viewBox="0 0 16 14" className="h-[14px] w-4" fill="#fff"><path d="m4 0 4 2.500L4 5 0 2.500zM12 0l4 2.500L12 5 8 2.500zM4 5.200l4 2.500-4 2.500L0 7.700zM12 5.200l4 2.500-4 2.500-4-2.500zM8 8.800l4 2.500L8 14l-4-2.700z" /></svg>
        </button>
        <button type="button" aria-label="Volume muted" className="flex w-6 justify-center">
          <svg viewBox="0 0 15 12" className="h-3 w-[15px]" fill="none" stroke="#fff"><path d="M.5 4v4h2L6 11.500V.5L2.500 4zM9 4l4.500 4.500m0-4.500L9 8.500" /></svg>
        </button>
        <button type="button" aria-label="Wi-Fi" className="flex w-[26px] justify-center">
          <svg viewBox="0 0 14 14" className="h-[14px] w-[14px]" fill="none" stroke="#ddd"><path d="M1 13A12 12 0 0 1 13 1.500M4 13.500A9 9 0 0 1 13 4.800M7 13.500A6 6 0 0 1 13 8M10 13.500a3 3 0 0 1 3-3" /></svg>
        </button>
        <button type="button" className="w-[58px] text-center text-[12px] leading-[18px]">
          <span className="block">6:44 AM</span>
          <span className="block">4/9/2020</span>
        </button>
        <button type="button" aria-label="Notifications" className="ml-[14px] flex w-[17px] justify-center">
          <svg viewBox="0 0 16 16" className="h-4 w-4" fill="none" stroke="#fff" strokeWidth="1.200"><path d="M.6.600h14.800v11.400H10l-2 3-2-3H.6z" /></svg>
        </button>
        <span className="ml-5 mr-[4px] h-10 w-px bg-[#6a6e6d]" />
      </div>
    </footer>
  );
}

export default function App() {
  return (
    <div className="relative flex h-screen flex-col overflow-hidden bg-[#f0f0f0]">
      <TitleBar />
      <Toolbars />
      <div className="flex min-h-0 flex-1">
        <ProjectBar />
        <span className="mr-[3px] w-[3px] shrink-0 bg-[#fafafa]" />
        <Workspace />
      </div>
      <StatusBar />
      <Taskbar />
      <DecideDialog />
    </div>
  );
}
